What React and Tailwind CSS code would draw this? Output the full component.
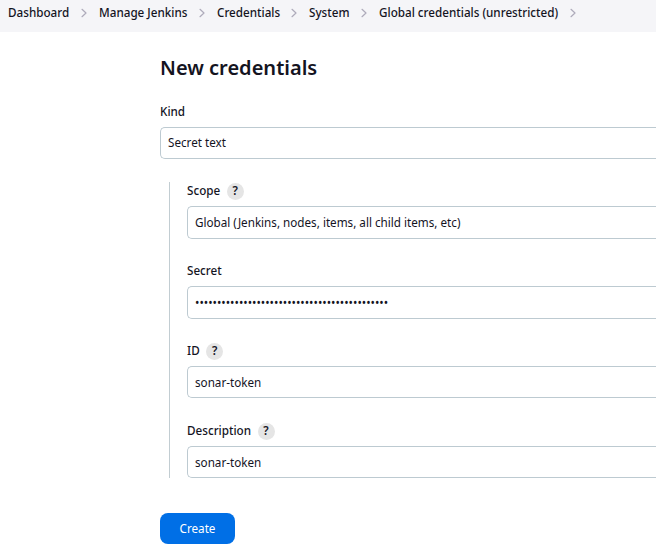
const crumbs = [
  { label: "Dashboard", width: "w-[91px]" },
  { label: "Manage Jenkins", width: "w-[118px]" },
  { label: "Credentials", width: "w-[92px]" },
  { label: "System", width: "w-[70px]" },
  { label: "Global credentials (unrestricted)", width: "w-[209px]" },
];

function Breadcrumbs() {
  return (
    <nav className="flex h-8 bg-[#f5f5f8] pl-2 font-medium">
      {crumbs.map(({ label, width }) => (
        <div key={label} className={`flex h-[26px] shrink-0 items-center ${width}`}>
          <span className="grow">{label}</span>
          <svg className="mr-[11.7px] h-2.5 w-1.5 shrink-0" viewBox="0 0 6 10" fill="none" stroke="#aeabbb" strokeWidth="1.2" strokeLinecap="round" strokeLinejoin="round">
            <path d="M1 1.3l4 3.7-4 3.7" />
          </svg>
        </div>
      ))}
    </nav>
  );
}

function Field({ label, help, value, className = "", box = "h-8" }) {
  return (
    <div className={className}>
      <div className="flex h-[18px] items-center gap-[6.5px] font-medium">
        <span>{label}</span>
        {help && (
          <span className="flex h-[17px] w-[17px] items-center justify-center rounded-full bg-[#e5e5e5] text-[11.68px] font-semibold">?</span>
        )}
      </div>
      <div className={`mt-1.5 flex items-center rounded-l-[5px] border border-r-0 border-[#bdcad1] pl-[7px] ${box}`}>{value}</div>
    </div>
  );
}

export default function App() {
  return (
    <div className="h-[553px] w-[656px] overflow-hidden bg-white font-['Noto_Sans',sans-serif] text-[11.68px] leading-4 whitespace-nowrap text-[#14141f]">
      <Breadcrumbs />
      <main className="pl-40">
        <h1 className="pt-[22px] text-[20.05px] leading-7 font-semibold">New credentials</h1>
        <Field className="mt-[21px]" label="Kind" value="Secret text" />
        <section className="mt-[23px] ml-[9px] flex h-[296px] flex-col border-l border-[#c2cdd2] pl-[17px]">
          <Field className="h-20" box="h-[33px] pt-px" label="Scope" help value="Global (Jenkins, nodes, items, all child items, etc)" />
          <Field className="h-20" box="h-[33px] pt-px" label="Secret" value={"•".repeat(44)} />
          <Field className="h-20" box="h-8 pt-0.5" label="ID" help value="sonar-token" />
          <Field className="h-14" box="h-8 pt-0.5" label="Description" help value="sonar-token" />
        </section>
        <button className="mt-[35px] h-[31px] w-[75px] rounded-[8px] bg-[#006fe6] text-white">Create</button>
      </main>
    </div>
  );
}
